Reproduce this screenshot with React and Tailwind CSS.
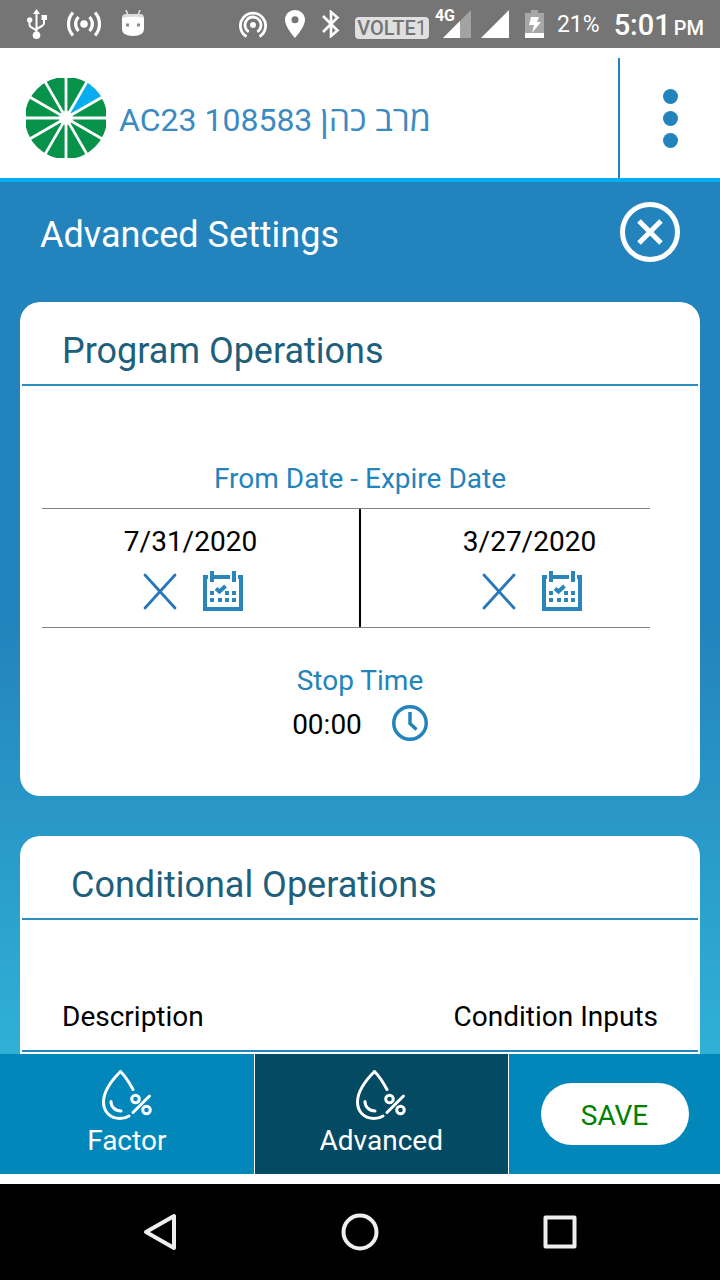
const statusFont = "font-['Roboto','Liberation_Sans',sans-serif]";

function UsbIcon() {
  return (
    <svg className="h-8 w-5" viewBox="0 0 20 32" fill="none" stroke="white" strokeWidth="2">
      <path d="M9.500 5v22M2.500 12v4.500q0 2 2 3l5 3M17 11v4q0 2-2 3l-5.500 3" />
      <path d="M6 6l3.500-5L13 6z" fill="white" stroke="none" />
      <circle cx="9.500" cy="27.300" r="3.800" fill="white" stroke="none" />
      <circle cx="2.700" cy="12" r="2.700" fill="white" stroke="none" />
      <path d="M14.500 7H20v5h-5.500z" fill="white" stroke="none" />
    </svg>
  );
}

function HotspotIcon() {
  return (
    <svg className="h-7 w-[34px]" viewBox="0 0 34 28" fill="none" stroke="white" strokeWidth="3.200">
      <circle cx="17" cy="14" r="3.800" fill="white" stroke="none" />
      <path d="M11.500 7a10 10 0 0 0 0 14M22.500 7a10 10 0 0 1 0 14M6 2.500a17 17 0 0 0 0 23M28 2.500a17 17 0 0 1 0 23" />
    </svg>
  );
}

function DroidIcon() {
  return (
    <svg className="h-7 w-6" viewBox="0 0 24 28">
      <path d="M5 0l2 5M19 0l-2 5" stroke="#ddd" strokeWidth="1.600" />
      <path d="M1 8q0-4 4-4h14q4 0 4 4v4H1z" fill="#dcdcdc" />
      <path d="M1 8q11-2.500 22 0v11q0 7-11 7T1 19z" fill="white" />
      <path d="M5 13.500h3v3H5zM16 13.500h3v3h-3z" fill="#8a8a8a" />
    </svg>
  );
}

function CastIcon() {
  return (
    <svg className="h-7 w-7" viewBox="0 0 28 28" fill="none" stroke="white" strokeWidth="2.800">
      <circle cx="14" cy="15" r="3" fill="white" stroke="none" />
      <path d="M7.500 26.500a12.600 12.600 0 1 1 13 0M9.800 21.800a8 8 0 1 1 8.400 0" />
    </svg>
  );
}

function PinIcon() {
  return (
    <svg className="h-7 w-5" viewBox="0 0 20 28">
      <path
        fillRule="evenodd"
        fill="white"
        d="M10 0C4.500 0 0 4.300 0 9.800 0 17 10 28 10 28s10-11 10-18.200C20 4.300 15.500 0 10 0zm0 6.300a3.500 3.500 0 1 1 0 7 3.500 3.500 0 0 1 0-7z"
      />
    </svg>
  );
}

function BluetoothIcon() {
  return (
    <svg className="h-7 w-5" viewBox="0 0 20 28" fill="none" stroke="white" strokeWidth="2.600">
      <path d="M2 6l14.500 14.500-6.500 5.500V2l6.500 5.500L2 22" />
    </svg>
  );
}

function SignalIcon({ partial }) {
  return (
    <svg className="h-7 w-7" viewBox="0 0 28 28">
      <path d="M0 28L28 0v28z" fill={partial ? "#a3a3a3" : "white"} />
      {partial && <path d="M0 28l17-17v17z" fill="white" />}
    </svg>
  );
}

function BatteryIcon() {
  return (
    <svg className="h-7 w-5" viewBox="0 0 20 28">
      <path d="M6 0h7v3h6v25H0V3h6z" fill="#a6a6a6" />
      <path d="M0 23h19v5H0z" fill="white" />
      <path d="M6 7h8l-2 5h4l-9 11 2-8H4z" fill="white" />
    </svg>
  );
}

function StatusBar() {
  return (
    <div className={`flex h-12 shrink-0 items-center bg-[#757575] pl-[27px] pr-4 text-white ${statusFont}`}>
      <div className="flex items-center gap-5">
        <UsbIcon />
        <HotspotIcon />
        <DroidIcon />
      </div>
      <div className="ml-auto flex items-center">
        <CastIcon />
        <span className="ml-[18px]"><PinIcon /></span>
        <span className="ml-4"><BluetoothIcon /></span>
        <span className="ml-3.5 mt-2 rounded bg-[#e0e0e0] px-0.5 text-xl font-medium leading-[22px] text-[#757575]">
          VOLTE<span className="font-normal">1</span>
        </span>
        <span className="relative ml-3.5">
          <SignalIcon partial />
          <span className="absolute -left-2 -top-1 text-base font-bold leading-5">4G</span>
        </span>
        <span className="ml-2.5"><SignalIcon /></span>
        <span className="ml-4"><BatteryIcon /></span>
        <span className="ml-3 mt-0.5 text-[23px]">21%</span>
        <div className="ml-3.5 mt-1 flex items-baseline gap-[3px] font-medium">
          <span className="text-[29px] leading-8">5:01</span>
          <span className="text-xl leading-8">PM</span>
        </div>
      </div>
    </div>
  );
}

function Logo() {
  const angles = [0, 30, 60, 90, 120, 150];
  return (
    <svg className="h-20 w-20 shrink-0" viewBox="0 0 80 80">
      <circle cx="40" cy="40" r="41" fill="#07924a" />
      <path d="M40 40L60.500 4.500A41 41 0 0 1 75.500 19.500z" fill="#06aeef" />
      {angles.map((angle) => (
        <path key={angle} d="M40-2v84" stroke="white" strokeWidth="2.800" transform={`rotate(${angle} 40 40)`} />
      ))}
      <circle cx="40" cy="40" r="7" fill="white" />
    </svg>
  );
}

function Header() {
  return (
    <header className="flex shrink-0 border-b-4 border-[#06aeef] bg-white pt-2.5">
      <div className="flex h-[120px] flex-1 items-center pl-[26px]">
        <Logo />
        <h1 className="ml-[13px] mt-0.5 text-[32px] leading-10 text-[#3b8bc2]">
          AC23 108583 <span className="text-[34px]">מרב כהן</span>
        </h1>
      </div>
      <button
        type="button"
        aria-label="Menu"
        className="flex w-[102px] flex-col items-center justify-center gap-[7px] border-l-2 border-[#2383bc]"
      >
        <span className="size-[15px] rounded-full bg-[#2383bc]" />
        <span className="size-[15px] rounded-full bg-[#2383bc]" />
        <span className="size-[15px] rounded-full bg-[#2383bc]" />
      </button>
    </header>
  );
}

function Card({ title, titleClass, className, children }) {
  return (
    <section className={`rounded-[20px] bg-white px-0.5 ${className}`}>
      <h3 className={`border-b-2 border-[#2a8fbd] pb-3 pt-7 text-4xl leading-[42px] text-[#205f7c] ${titleClass}`}>
        {title}
      </h3>
      {children}
    </section>
  );
}

function CalendarIcon() {
  return (
    <svg className="size-10" viewBox="0 0 40 40" fill="#2a85bb">
      <path d="M0 4h5v4H4v28h32V8h-1V4h5v36H0z" />
      <path d="M7 0h4v11H7zM29 0h4v11h-4zM11 4h16v4H11z" />
      <path d="M7 20h4v4H7zM22 20h4v4h-4zM29 20h4v4h-4zM7 27h4v4H7zM15 27h4v4h-4zM22 27h4v4h-4zM29 27h4v4h-4z" />
      <path d="M13 17.500l3.500 3 6-5.500" fill="none" stroke="#2a85bb" strokeWidth="4" />
    </svg>
  );
}

function DateCell({ value, label, className }) {
  return (
    <div className={`flex h-[118px] flex-col items-center pt-[17px] ${className}`}>
      <span className="text-[28px] leading-8">{value}</span>
      <div className="ml-[3px] mt-[13px] flex items-center gap-[25px]">
        <button type="button" aria-label={`Clear ${label}`}>
          <svg className="h-10 w-9" viewBox="0 0 36 40" fill="none" stroke="#2877ba" strokeWidth="2.800" strokeLinecap="round">
            <path d="M3 4l30 33M33 4L3 37" />
          </svg>
        </button>
        <button type="button" aria-label={`Pick ${label}`}>
          <CalendarIcon />
        </button>
      </div>
    </div>
  );
}

function ProgramOperations() {
  return (
    <Card title="Program Operations" titleClass="pl-10" className="pb-[55px]">
      <div className="pl-5 pr-12 pt-[77px]">
        <h4 className="mb-[13px] ml-7 text-center text-[28px] leading-8 text-[#2383bc]">From Date - Expire Date</h4>
        <div className="flex border-y border-[#808080]">
          <DateCell value="7/31/2020" label="from date" className="w-[319px] border-r-2 border-black pr-5" />
          <DateCell value="3/27/2020" label="expire date" className="flex-1 pl-12" />
        </div>
      </div>
      <div className="mt-[37px] flex flex-col items-center">
        <h4 className="text-[28px] leading-8 text-[#2383bc]">Stop Time</h4>
        <div className="mt-2 flex items-center gap-[30px]">
          <span className="pt-1 text-[28px] leading-8">00:00</span>
          <button type="button" aria-label="Pick stop time">
            <svg className="size-9" viewBox="0 0 36 36" fill="none" stroke="#2383bc" strokeWidth="3.500">
              <circle cx="18" cy="18" r="16.250" />
              <path d="M18 7v11.500l6.500 6" />
            </svg>
          </button>
        </div>
      </div>
    </Card>
  );
}

function ConditionalOperations() {
  return (
    <Card title="Conditional Operations" titleClass="pl-[49px]" className="min-h-[494px]">
      <table className="mt-[81px] w-full text-[28px] leading-8">
        <thead>
          <tr className="border-b-2 border-[#2383bc]">
            <th scope="col" className="pb-[17px] pl-10 text-left font-normal">Description</th>
            <th scope="col" className="pb-[17px] pr-10 text-right font-normal">Condition Inputs</th>
          </tr>
        </thead>
      </table>
    </Card>
  );
}

function DropPercentIcon() {
  return (
    <svg className="h-[50px] w-[50px]" viewBox="0 0 50 50" fill="none" stroke="white" strokeWidth="3" strokeLinecap="round">
      <path d="M31 19.500C27 12 22 5 18.500 1.500 11 9 1.500 21 1.500 32c0 10 7 16.500 16.500 16.500 3.500 0 6.500-.800 9-2.500" />
      <path d="M9 31.500c0 5 4 9.500 10 9.500M31 42.500L47.500 26" />
      <circle cx="33.500" cy="29" r="3.800" />
      <circle cx="44.500" cy="40" r="3.800" />
    </svg>
  );
}

function Tab({ label, active }) {
  return (
    <button
      type="button"
      aria-pressed={active}
      className={`flex flex-1 flex-col items-center border-r border-white pt-4 text-[28px] leading-8 ${
        active ? "bg-[#044a63]" : "bg-[#0287bb]"
      }`}
    >
      <DropPercentIcon />
      <span className="mt-[5px]">{label}</span>
    </button>
  );
}

function TabBar() {
  return (
    <nav className="flex h-[120px] shrink-0 text-white">
      <Tab label="Factor" active={false} />
      <Tab label="Advanced" active />
      <div className="flex w-[211px] items-center justify-center bg-[#0287bb]">
        <button type="button" className="h-[62px] w-[148px] rounded-full bg-white pt-1 text-[28px] text-[#008000]">
          SAVE
        </button>
      </div>
    </nav>
  );
}

function SystemNav() {
  return (
    <div className="mt-2.5 flex h-24 shrink-0 items-center justify-center gap-40 bg-black">
      <button type="button" aria-label="Back">
        <svg className="size-10" viewBox="0 0 40 40" fill="none" stroke="#eee" strokeWidth="4" strokeLinejoin="round">
          <path d="M34 4v32L6 20z" />
        </svg>
      </button>
      <button type="button" aria-label="Home">
        <svg className="size-10" viewBox="0 0 40 40" fill="none" stroke="#eee" strokeWidth="4">
          <circle cx="20" cy="20" r="16.500" />
        </svg>
      </button>
      <button type="button" aria-label="Recent apps">
        <svg className="size-10" viewBox="0 0 40 40" fill="none" stroke="#eee" strokeWidth="4" strokeLinejoin="round">
          <path d="M5.500 5.500h29v29h-29z" />
        </svg>
      </button>
    </div>
  );
}

export default function App() {
  return (
    <div className="flex h-screen flex-col bg-white font-['Roboto','Open_Sans','Noto_Sans',sans-serif] text-black">
      <StatusBar />
      <Header />
      <main className="min-h-0 flex-1 overflow-y-auto bg-linear-to-b from-[#2383bc] from-50% to-[#30b0d6] px-5 [scrollbar-width:none]">
        <div className="flex items-center justify-between py-5 pl-5 pr-5">
          <h2 className="mt-1.5 text-4xl leading-[42px] text-white">Advanced Settings</h2>
          <button type="button" aria-label="Close">
            <svg className="size-[60px]" viewBox="0 0 60 60" fill="none" stroke="white" strokeWidth="5">
              <circle cx="30" cy="30" r="27.500" />
              <path d="M19 19l22 22M41 19L19 41" />
            </svg>
          </button>
        </div>
        <div className="mt-5 flex flex-col gap-10">
          <ProgramOperations />
          <ConditionalOperations />
        </div>
      </main>
      <TabBar />
      <SystemNav />
    </div>
  );
}
